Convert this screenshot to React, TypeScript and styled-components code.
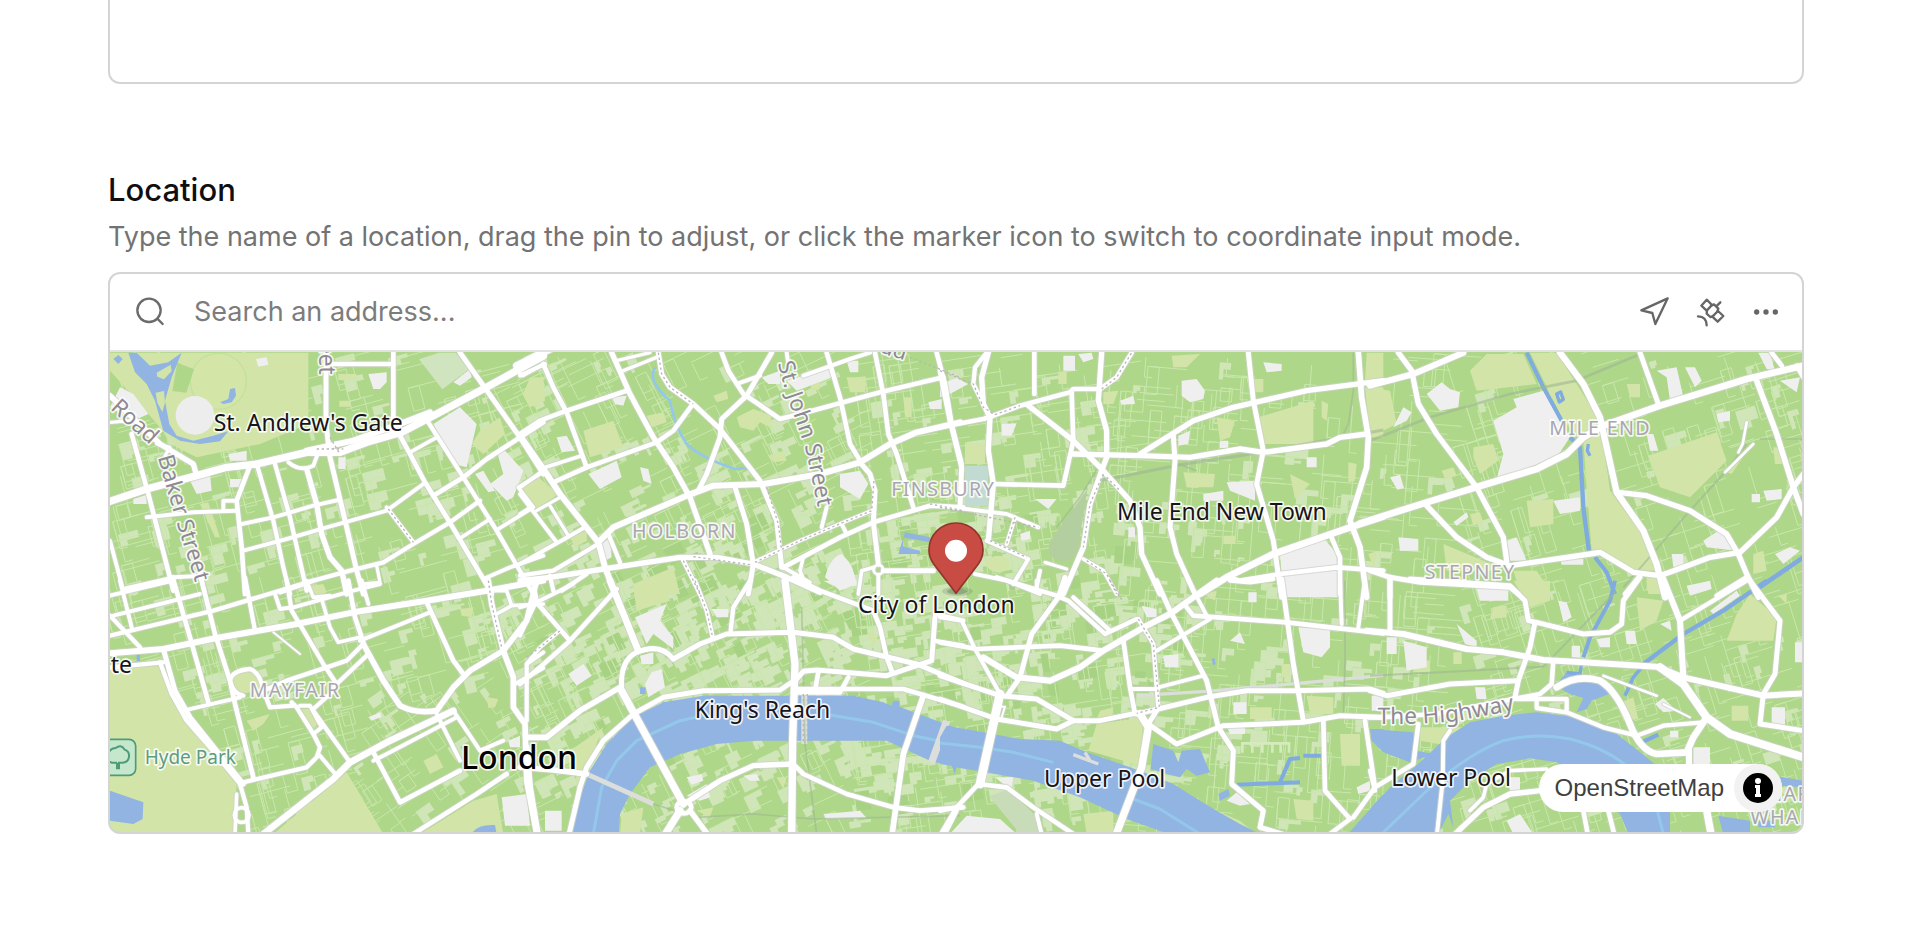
import React from 'react';
import styled, { createGlobalStyle } from 'styled-components';

const GlobalStyle = createGlobalStyle`
  * { box-sizing: border-box; }
  body {
    margin: 0;
    background: #fff;
    font-family: Inter, "Liberation Sans", sans-serif;
    -webkit-font-smoothing: antialiased;
  }
`;

const Page = styled.main`
  display: flex;
  flex-direction: column;
  gap: 88px;
  padding: 0 104px 118px 108px;
`;

const NotesInput = styled.textarea`
  display: block;
  width: 100%;
  height: 84px;
  border: 2px solid #d4d4d4;
  border-top: 0;
  border-radius: 0 0 12px 12px;
  background: #fff;
  resize: none;
  outline: none;
`;

const Field = styled.section`
  display: flex;
  flex-direction: column;
`;

const FieldLabel = styled.label`
  color: #0f0f12;
  font-size: 31px;
  font-weight: 500;
  line-height: 36px;
`;

const FieldHint = styled.p`
  margin: 11px 0 17px;
  color: #737373;
  font-size: 27px;
  line-height: 36px;
`;

const MapCard = styled.div`
  overflow: hidden;
  border: 2px solid #d4d4d4;
  border-radius: 12px;
  background: #fff;
`;

const SearchRow = styled.div`
  display: flex;
  align-items: center;
  gap: 28px;
  height: 78px;
  padding: 0 20px 0 24px;
  border-bottom: 2px solid #e2e2e2;
  color: #6b6b6b;
`;

const SearchInput = styled.input`
  flex: 1;
  min-width: 0;
  padding: 0;
  border: 0;
  outline: none;
  background: none;
  color: #171717;
  font: 400 27px/36px Inter, "Liberation Sans", sans-serif;
  &::placeholder { color: #7c7c7c; opacity: 1; }
`;

const Actions = styled.div`
  display: flex;
  gap: 24px;
`;

const IconButton = styled.button`
  display: flex;
  width: 32px;
  height: 32px;
  padding: 0;
  border: 0;
  background: none;
  color: #666;
`;

const Icon = styled.svg`
  display: block;
  flex: none;
  width: 32px;
  height: 32px;
  fill: none;
  stroke: currentColor;
  stroke-width: 7;
  stroke-linecap: round;
  stroke-linejoin: round;
`;

const MapView = styled.div`
  position: relative;
`;

const MapCanvas = styled.svg`
  display: block;
  width: 100%;
  height: auto;
  background: #aed789;
`;

const Attribution = styled.div`
  position: absolute;
  right: 20px;
  bottom: 20px;
  display: flex;
  align-items: center;
  gap: 10px;
  height: 48px;
  padding-left: 16px;
  border-radius: 24px;
  background: #fff;
`;

const AttributionLink = styled.a`
  color: #404040;
  font: 400 24px/48px "Liberation Sans", Arial, sans-serif;
  text-decoration: none;
`;

const InfoButton = styled.button`
  display: flex;
  align-items: center;
  justify-content: center;
  width: 48px;
  height: 48px;
  padding: 0;
  border: 0;
  border-radius: 50%;
  background: #f2f2f2;
`;

const PlaceText = styled.text<{ $size: number; $color?: string; $tracking?: number; $weight?: number }>`
  font-family: "Noto Sans", "Open Sans", sans-serif;
  font-size: ${(p) => p.$size}px;
  font-weight: ${(p) => p.$weight ?? 400};
  letter-spacing: ${(p) => p.$tracking ?? 0}px;
  fill: ${(p) => p.$color ?? '#181418'};
  stroke: rgba(255, 255, 255, 0.85);
  stroke-width: 10px;
  stroke-linejoin: round;
  paint-order: stroke;
`;

type Line = [number, string];
interface Sheet {
  x: number;
  y: number;
  parks: string;
  built: string;
  water: string;
  canals?: Line[];
  rails?: Line[];
  roads: Line[];
  dashes?: string;
}

// The map is divided into eight sheets; three map units make one pixel at full width.
const SHEETS: Sheet[] = [
  {
    x: -27, y: -36,
    parks: 'M30,36 H625 V250 L480,310 L290,350 L230,320 L120,190 L30,90Z M1250,450 L1320,400 V500Z M1140,270 L1200,230 L1215,280 L1150,340 L1115,310Z M715,100H770V118H715Z M718,180H752V198H718Z M1320,130 Q1270,130 1270,165 Q1285,200 1320,200Z M300,490 L325,485 L360,590 L345,590Z',
    built: 'M60,140 L100,160 L145,220 L100,240 L30,200Z M1000,250 L1080,200 L1130,250 L1100,380 L1060,370Z M1190,330 L1215,330 L1270,390 L1240,470 L1220,480 L1170,430 L1210,400Z M270,420 L330,400 L335,450 L290,460Z M805,100 L860,95 V125 L840,145 H820Z M468,55 L500,50 L505,72 L475,78Z M385,340 L440,330 V360 H390Z M715,350 h22 v35 h-22z M1060,125 L1110,85 L1115,110 L1080,135Z M1125,400 L1150,390 L1185,450 L1165,455Z M390,415 h35 v25 h-35z M100,475 L140,462 V490 H100Z',
    water: 'M85,36 L105,95 L140,130 L165,180 L190,270 L240,300 L300,310 L360,302 L385,272 L340,285 L280,300 L230,285 L208,250 L195,180 L215,110 L245,36 L205,65 L150,75 L110,36Z M40,55 L55,43 L68,55 L55,70Z M360,185 L385,175 L390,145 L405,142 L408,165 L395,185 L370,190Z',
    roads: [
      [22, 'M30,482 L140,445 L290,405 L380,380 L470,370 L620,335 L720,335 L800,305 L905,275 L1000,225 L1150,145 L1330,46'],
      [18, 'M620,330 L760,300 L900,250 L990,215'],
      [14, 'M95,280 L145,460 L220,750'], [12, 'M30,600 L70,750'], [10, 'M30,245 L95,240'],
      [16, 'M30,165 L180,310 L280,370 L290,405'],
      [15, 'M678,30 L678,250 L690,350 L740,560 L770,690 L790,760'],
      [13, 'M700,70 H880'], [14, 'M880,30 V270'],
      [15, 'M1080,36 L1150,135 L1260,290 L1330,400'],
      [14, 'M900,285 L930,340 L975,425 L1040,530 L1150,715 L1175,760'],
      [13, 'M985,245 L1090,410 L1190,570 L1300,760'],
      [11, 'M930,335 L1010,290'], [14, 'M1000,465 L1090,410 L1160,355 L1330,245'],
      [11, 'M1250,90 L1268,105 L1330,70'],
      [14, 'M450,375 L410,480 L425,620 L435,760'], [13, 'M470,370 L520,540 L550,680 L570,760'],
      [13, 'M525,370 L570,530 L620,750'], [16, 'M620,385 L650,490 L665,580 L690,650 L725,690 L740,760'],
      [12, 'M565,365 Q600,395 640,375 L655,335'],
      [12, 'M425,550 L520,530 L640,495 L715,478'], [12, 'M430,630 L560,595 L680,560 L860,510 L970,430'],
      [12, 'M860,500 L940,605'], [13, 'M540,755 L640,720 L750,690 L850,665 L940,610 L1050,545 L1140,480'],
      [12, 'M70,745 L220,710 L310,705'], [12, 'M140,530 L280,515 L410,510 M370,510 V480 H410'],
      [11, 'M1320,400 L1255,440 L1300,500 L1195,565 M1085,590 L1170,535'],
      [12, 'M1150,715 L1230,680 L1330,645'], [12, 'M300,700 L315,760'], [10, 'M830,675 L840,725 L790,730'],
      [10, 'M170,310 L210,320 L195,345'],
    ],
    dashes: 'M650,325 H730 M865,505 L940,605 M690,290 L720,340',
  },
  {
    x: -27, y: 684,
    parks: 'M30,265 L180,255 L210,350 L260,430 L330,510 L410,610 L400,760 H30Z M520,760 L740,575 L850,760Z M960,760 L1120,660 L1190,640 L1210,760Z M390,305 Q395,275 430,270 Q480,280 470,320 Q440,350 400,330Z M605,385 L630,385 L655,430 L635,445Z M970,540 L1010,520 L1030,560 L990,580Z M1080,85 L1120,80 L1115,110 L1085,105Z M1160,350 L1195,355 L1185,380 L1165,382Z M440,420 L510,400 L490,430 L460,450Z M630,15 L670,10 L680,35 L650,50Z',
    built: 'M1205,650 L1280,640 L1290,735 L1215,735Z M1225,480 L1260,465 V500 H1230Z M805,410 L840,395 L845,408 L815,420Z',
    water: 'M30,630 L130,665 L128,715 L100,730 L30,720Z M1115,760 Q1130,730 1185,733 L1190,760Z M110,222h10v20h-10z',
    roads: [
      [12, 'M30,45 L220,0'], [12, 'M40,105 L300,40'], [13, 'M30,165 L340,90 L590,15 L640,0'],
      [18, 'M30,218 L190,205 L350,172 L590,130 L760,95 L980,60 L1160,30 L1330,0'],
      [12, 'M60,0 L95,140'], [13, 'M30,105 L120,200'], [14, 'M218,-10 L270,170 L325,365'],
      [14, 'M300,-20 L345,160 L390,300 L405,370 L460,590'], [13, 'M435,-10 L465,150'],
      [12, 'M525,40 L540,85 L580,80 L760,30 L840,10'], [13, 'M560,0 L575,90 L670,250 L710,310'],
      [11, 'M620,0 L640,50 L690,45'], [11, 'M665,55 L690,140 L715,185 L780,170'],
      [14, 'M745,0 L765,110 L790,185'], [12, 'M785,0 L805,70'], [14, 'M980,65 L1060,240 L1090,280'],
      [12, 'M780,180 L990,95'], [17, 'M1165,0 L1175,70 L1210,210 L1240,290 L1240,380 L1275,430 L1280,600 L1310,760'],
      [17, 'M790,190 L850,300 L900,375 Q950,400 1010,390 L1060,320 L1110,270 L1210,210 L1280,120 L1310,0'],
      [13, 'M490,330 L560,300 L680,260 L740,240 L790,190'], [13, 'M800,225 L710,310 L690,340 L640,385'],
      [13, 'M30,260 L190,245'], [13, 'M180,245 L215,340 L260,420 L330,500 L420,610 L440,680 L445,760'],
      [15, 'M190,205 L225,330 L270,410 L390,560 L430,610'], [12, 'M250,390 L420,350'],
      [13, 'M390,300 Q395,270 450,265 Q480,275 490,330 L510,380 L580,375 M390,300 Q400,340 430,345'],
      [13, 'M575,365 L590,380 L640,460 L660,500 L650,530 L620,560 L430,605'],
      [12, 'M600,375 L630,375 L665,440 L640,460'], [13, 'M640,390 L750,545'], [12, 'M660,525 L710,585'],
      [20, 'M490,760 L700,595 L750,545 L870,480 L1060,390'],
      [14, 'M820,515 L900,665 L1080,570'], [12, 'M820,540 L860,520 L1070,410'], [12, 'M1010,400 L1080,540'],
      [12, 'M1060,390 L1140,510 L1210,480'], [14, 'M940,760 L1130,640 L1220,580'],
      [11, 'M410,640 L405,760 M403,703 a22,22 0 1 0 44,0 a22,22 0 1 0 -44,0'],
      [11, 'M1180,30 L1220,30 L1235,75 L1330,70 M1190,100 L1235,75'],
      [12, 'M1280,420 L1280,250 L1330,215 M1245,310 L1330,262'], [6, 'M520,155 L600,220'],
    ],
    dashes: 'M1165,0 L1175,70 L1205,200',
  },
  {
    x: 1233, y: -36,
    parks: 'M190,270 L280,240 L310,320 L210,350Z M0,440 L50,405 L115,460 L45,510Z M980,110 H1035 V155 H990Z M340,730 L460,680 L480,760H345Z M380,225 L430,215 L440,245 L395,260Z M650,230 L700,205 L755,225 L750,260 L720,245 L700,270 L660,260Z M745,345 L790,330 L800,360 L760,365Z M30,110 L70,110 L75,180 L30,200 L10,160Z M1150,170 h25 v60 h-20z M870,130 L900,120 V145 L875,155Z M580,165 L620,150 L625,175 L590,185Z M150,590 L200,570 V600 L165,620Z',
    built: 'M205,400 L290,360 L305,410 L240,445Z M960,400 L1020,390 L1045,430 L1020,475 L960,440Z M915,710 Q930,650 965,640 Q1000,670 1010,730 L960,750Z M800,120 L930,80 L935,110 L830,150Z M360,380 L385,385 L395,430 L370,420Z M275,170 L320,165 L310,195 L285,190Z M980,60 h35 v35 h-25z M725,110 L780,90 L780,130 L745,130Z M1225,185 L1265,175 V205 H1230Z M245,610 L270,590 L275,650 L255,660Z M110,290 L140,285 L165,330 L125,335Z',
    water: 'M1155,575 L1230,590 V605 L1150,590 V618 L1200,630 V640 L1135,640Z',
    canals: [[8, 'M405,80 Q380,120 450,180 Q465,260 500,310 Q540,350 645,385 L690,382']],
    roads: [
      [22, 'M-10,75 L100,20'], [12, 'M0,105 L75,70'], [14, 'M70,70 L100,140 L140,215 L200,380'],
      [16, 'M275,36 L330,160 L400,290 L460,380 L510,470 L570,640'], [10, 'M310,90 L410,50 M290,60 L390,36'],
      [14, 'M0,280 L60,240 L140,210 L320,150'], [11, 'M60,385 L185,345'],
      [14, 'M100,425 L200,380 L410,305 L460,270 L515,195'],
      [15, 'M415,36 L425,100 L450,140 L520,190 L600,265 L720,420 L770,540 L785,680'],
      [15, 'M755,36 L680,165 L605,235 L600,290 L560,400 L535,450'],
      [14, 'M605,36 L625,90 L670,160 L715,190 L780,235 L860,215 L1080,155 L1270,110'],
      [12, 'M650,130 L720,105 M850,105 L990,55 L1050,36'], [12, 'M800,36 L805,70'],
      [14, 'M920,36 L960,170 L990,310 L1020,360'],
      [18, 'M235,605 L280,560 L500,465 L580,435 L730,430 L900,400 L1020,365 L1110,310 L1190,275 L1320,245'],
      [14, 'M1065,36 L1090,160 L1105,280 L1130,340 L1180,500'], [14, 'M1250,36 L1275,130 L1295,250 L1325,370'],
      [18, 'M0,285 L70,385 L120,460 L235,605 L255,680 L290,770'],
      [12, 'M0,440 L70,390'], [12, 'M0,460 L110,605'], [10, 'M50,510 L120,470 M90,495 L145,585 M0,520 L30,500'],
      [12, 'M0,670 L195,560'], [16, 'M0,720 L90,710 L250,685 L480,650 L590,650 L700,670 L800,710 L900,755'],
      [13, 'M0,705 L100,690 L235,610 M125,750 L200,700 M90,705 L100,750'], [13, 'M265,580 L300,665'],
      [13, 'M485,650 L540,760'], [15, 'M645,440 L680,550 L700,670 L685,760'], [11, 'M700,665 L840,600 L970,545 L1055,510'],
      [14, 'M790,680 L960,590 L1060,545 L1230,495 L1330,500'],
      [15, 'M1020,365 L1050,400 L1065,450 L1060,545 L1075,670'], [12, 'M1075,704 V760'],
      [12, 'M920,500 L905,560'], [12, 'M965,550 L980,580'], [15, 'M1090,690 H1240'],
      [9, 'M1061,687 a14,14 0 1 0 28,0 a14,14 0 1 0 -28,0'], [11, 'M1062,680 L1025,690 L1015,760'],
      [11, 'M850,650 L840,690 L860,740 M790,680 L870,725'],
    ],
    dashes: 'M415,36 L425,100 L450,140 L520,190 M740,440 L775,550 L785,630 M490,660 L540,760 M705,665 L840,600 L970,545 L1055,510 L1062,420 M520,648 L690,672 M1230,490 L1330,510 M1170,50 L1320,110',
  },
  {
    x: 1233, y: 684,
    parks: 'M340,20 L430,-10 L450,60 L350,90Z M165,500 L250,440 L200,560 L170,640Z M305,700 L370,680 L360,760 H300Z M770,590 L800,590 L790,625Z M530,690 L580,680 L570,710Z M1040,150 L1075,165 L1060,200Z',
    built: 'M345,110 L440,70 L420,120 L460,170 L460,205 L400,160 L380,190Z M395,275 L425,265 L435,320 L385,350 L375,310Z M500,590 L545,580 L550,600 L515,612Z M500,645 L560,610 L570,650 L540,660Z M910,700 L1020,690 L1040,712 L920,715Z M910,0 H1010 V15 L940,15Z M360,225 L400,215 V250 H365Z M575,85 L625,85 V110 H590Z M75,690 h50 v60 h-50z M670,585 L710,580 L720,600 L690,600Z M145,280 L190,250 L215,285 L170,315Z',
    water: 'M155,770 L180,650 L210,570 L260,490 L340,410 L430,365 L550,345 L720,345 L1000,345 L1090,365 L1115,375 L1120,360 H1138 V378 L1330,450 V560 L1310,555 L1305,580 L1300,553 L1240,545 L1100,480 L870,480 L700,480 L590,490 L480,520 L390,560 L330,640 L300,700 L295,770Z M360,320h16v20h-16z',
    canals: [[9, 'M220,760 L245,620 L290,540 L350,480 L480,420 L560,402 M930,403 L1060,425 L1180,465 L1330,495']],
    rails: [[14, 'M200,580 L400,670'], [18, 'M853,340 V490'], [22, 'M1280,420 L1235,545'], [5, 'M400,670 L530,710 L700,700 L880,715 L1320,705 M845,80 L855,490 L890,760']],
    roads: [
      [12, 'M0,10 L40,0 L50,60 L0,165'], [14, 'M45,60 L150,180 M0,310 L60,260 L150,180 L290,25'],
      [12, 'M0,80 L50,65 L160,10'], [11, 'M20,420 L20,250 L60,200 L120,150'], [20, 'M270,0 L355,210'],
      [15, 'M305,320 Q300,240 350,215 Q420,185 460,235'],
      [15, 'M460,235 L540,190 L620,160 L820,155 L940,170 L1000,205 L1190,250 L1330,308'],
      [17, 'M20,470 H80 L180,390 L300,320'],
      [15, 'M145,770 L180,620 L200,560 L250,480 L340,400 L430,350 L550,330 L780,328 L830,295 L850,272 L890,268 L1100,285 L1190,255 L1235,240 L1245,110'],
      [14, 'M820,335 L960,335 L985,290 M820,325 L1150,325 L1330,378 M895,275 L885,330'],
      [22, 'M305,330 L490,670'], [16, 'M500,665 L600,600 L700,555 L815,550'],
      [14, 'M815,545 L850,580 L980,640 L1120,680 L1200,690 L1330,680'], [22, 'M795,0 L825,250 L818,480 L815,770'],
      [17, 'M1210,345 L1150,520 L1115,770'], [22, 'M480,690 L430,770'], [16, 'M510,690 L570,770'],
      [14, 'M470,680 a22,18 0 1 0 44,0 a22,18 0 1 0 -44,0'], [13, 'M690,0 L640,80 L632,150'],
      [13, 'M525,0 L560,90 L578,170'], [14, 'M820,-10 L900,30 L1060,90 L1080,140 L1100,230 L1115,270'],
      [13, 'M1245,100 L1330,120 M1240,180 L1330,195'], [13, 'M1310,690 L1270,770'], [18, 'M20,500 L30,620 L55,770'],
      [16, 'M0,560 L100,568 L200,580'],
    ],
    dashes: 'M525,0 L560,90 L578,170 M20,230 L60,200 L120,150 M850,340 V490 M862,340 V490',
  },
  {
    x: 2493, y: -36,
    parks: 'M955,230 L1120,180 V310 H970Z M730,395 L825,400 L820,440 L740,440Z M1050,400 L1110,430 L1065,475Z M830,230 L885,240 L870,290 L840,300Z M75,305 L135,310 V370 H75Z M1275,140 L1330,140 V290 H1290Z M695,45 L780,40 L740,80 L700,80Z M140,670 a35,25 0 1 0 70,0 a35,25 0 1 0 -70,0 M1280,36H1330V110L1275,120Z M1225,365 L1250,370 L1245,420 L1225,425Z M490,155 L535,150 L520,190 L490,190Z M920,115 h50 v40 h-40z M1145,180 L1165,190 L1160,240 L1145,230Z M355,95 L380,90 V130 H355Z M850,585 h35 v25 h-35z M1285,640 L1315,630 L1300,680Z',
    built: 'M725,120 L770,115 L795,150 L790,175 L750,185 L725,165Z M970,65 L1025,70 V90 L980,95Z M370,45 h35 v45 h-35z M1020,640 L1150,590 L1190,640 L1195,770 H1030Z M860,425 L945,420 V480 L870,450Z M790,460 L850,450 V480 H790Z M0,130 L50,112 L85,130 L20,165 L0,170Z M1100,350 h30 v30 h-30z M285,475 L350,475 L325,505Z M185,250 L230,248 L215,285 H185Z M540,180 L580,165 L585,190 L545,192Z M840,300 h25 v22 h-25z M715,285 L750,270 L745,310 L715,315Z M415,40 L455,36 L460,55 L430,65Z M565,560 h20 v30 h-20z M240,580 L270,570 V595 L245,600Z',
    water: '',
    rails: [[9, 'M480,420 L720,372 L900,345 L1330,268'], [5, 'M1240,36 V150 L1225,250 L1200,300 M715,370 L770,390 M480,370 L420,470 L350,560']],
    roads: [
      [15, 'M0,90 L30,240 L65,380 L60,500'], [16, 'M145,36 L125,110 L130,190 L150,230 L145,330 L160,430 L145,600'],
      [13, 'M140,36 L105,80 L100,130 L130,190'], [14, 'M0,260 L130,235 L160,225 L240,195 L390,155 L400,145 L480,145 L530,110 L575,36'],
      [14, 'M283,36 V160'], [14, 'M395,155 L400,300 L370,435 L165,430'],
      [16, 'M485,36 L475,180 L500,270 L500,350 L485,390 L450,490 L430,620 L370,760'],
      [16, 'M265,195 L400,300 L490,390 L570,480 L600,560 L605,640 L660,760'],
      [16, 'M400,340 L600,345 L750,350 L900,325 L970,335 L1160,310 L1200,290 L1280,280'],
      [16, 'M600,340 L760,240 L880,200 L1100,150 L1330,120'], [15, 'M700,285 L705,360 L690,560 L710,640 L765,760'],
      [15, 'M925,36 L940,180 L970,330 L950,430 L1000,600 L1025,770'],
      [17, 'M1255,36 L1265,170 L1285,290 L1280,380 L1230,540 L1260,620 L1280,770'],
      [20, 'M780,760 L860,710 L1000,640 L1230,560 L1330,528'], [14, 'M865,710 L900,720 L1020,700 L1190,680 L1330,690'],
      [14, 'M1170,580 L1200,650 V760'], [12, 'M0,495 L200,520 L295,560'], [12, 'M225,530 L200,610 M140,600 L265,655 L220,730'],
      [12, 'M105,700 L200,720 L300,760 M300,690 L290,740'], [11, 'M430,655 L490,690 L530,760'], [10, 'M315,665 L380,685'],
    ],
    dashes: 'M0,90 L100,130 L130,200 L165,222 L240,195 M485,145 L530,110 L575,36 M490,400 L450,490 L430,620 M0,500 L295,560 M225,530 L200,610 M150,600 L260,650 M440,660 L500,700 L530,760 M500,410 L540,450',
  },
  {
    x: 2493, y: 684,
    parks: 'M470,430 L610,410 L600,555 L445,510Z M930,380 H995 V415 H930Z M1100,345 L1180,350 V400 H1110Z M1200,460 H1260 V555 H1205Z M1060,655 L1120,660 V720 L1070,715Z M430,700 L520,690 L520,760H440Z M1025,250 h25 v40 h-25z M480,390 L520,380 L515,410 L470,415Z M790,40 L830,30 L825,60Z M830,690 L900,720 L930,745 H890Z',
    built: 'M1075,140 L1170,145 V200 L1145,230 L1090,215Z M1035,-5 H1190 V50 L1040,45Z M20,770 L80,705 L180,715 L230,760Z M870,180 L900,155 L915,190Z M925,35 h25 v30 h-25z M880,365 h40 v35 h-40z M605,75 L650,85 V110 H620Z M670,225 l45,-5 v40 h-40z M860,660 L890,635 L930,670 L900,675Z M860,435 h55 v25 h-45z M1250,620 L1290,600 V630 L1255,640Z M165,590 L220,590 L215,620 L190,610Z M1295,345 L1330,340 V390 H1295Z',
    water: 'M0,470 L20,435 L130,455 L240,475 L360,480 L440,515 L600,570 L700,610 L780,660 L830,690 L900,730 L980,770 H690 560,715 L560,715 L420,650 L280,600 L110,570 L45,560 V580 L35,555 L0,550Z M1330,640 L1215,770 H1330Z M640,490 L700,510 L715,545 L725,510 L780,505 L810,575 L770,585 L740,565 L720,590 L680,580 L632,565Z M835,640 L865,625 L870,645 L840,660Z M1295,445 H1330 V482 H1295Z M815,235l8,-4l4,20l-8,2z',
    canals: [[9, 'M0,487 L120,500 L220,515 L340,545 M580,655 L660,685 L780,760'], [12, 'M890,612 L1080,605 M1020,605 L1050,535 L1080,532 M1090,525 H1145']],
    rails: [[10, 'M590,345 L800,332 L1000,315 L1330,284'], [10, 'M400,522 L475,550 M435,515 L450,540'], [5, 'M1215,0 V240 L1210,410']],
    roads: [
      [12, 'M0,110 L65,120 L105,205 L180,340'], [14, 'M0,185 L110,205 L360,195 L490,210'],
      [18, 'M130,230 L230,290 L330,300 L420,260 L490,210 L620,135 L690,100 L830,0'],
      [15, 'M0,285 L180,345 L290,355 L400,420 L480,420 L600,395'], [15, 'M0,355 L170,415 L350,445 L400,420'],
      [26, 'M180,340 L120,610'], [15, 'M375,-10 L355,50 L275,160 L240,290 L205,340'],
      [13, 'M170,-10 L350,45 L385,60 L495,160 L590,115 M400,50 L510,150'], [12, 'M290,0 V25'],
      [15, 'M650,0 L690,90 L800,300 L835,440 L880,510 L875,610 L970,690 L960,740 L1060,770'],
      [12, 'M745,0 L800,105 M810,115 L650,210'], [14, 'M740,80 L760,105 L1040,125 L1330,158'],
      [14, 'M550,180 L570,320 L585,400'], [13, 'M595,115 L640,190 L655,380'], [12, 'M655,320 L790,285 M575,325 H655'],
      [15, 'M590,400 L655,385 L800,350 L920,330 L1060,330 L1290,325 L1330,338'],
      [22, 'M600,400 L625,440 L605,560 L525,770'], [15, 'M650,390 L625,430 L710,490 L850,435 L1090,425 L1200,405 L1330,410'],
      [15, 'M1025,-5 L1060,250 L1090,420'], [12, 'M1200,-5 L1205,130 M1275,-5 L1255,140'],
      [14, 'M1150,420 L1155,630 L1230,715 L1170,760'], [14, 'M1275,420 L1305,620 L1240,710'],
      [13, 'M870,0 L930,5 L1000,-5'], [14, 'M0,690 L50,680 L115,610 L200,620 L280,680 L400,760'],
      [14, 'M0,765 L50,680'], [12, 'M290,700 L305,760'], [6, 'M180,378 H195 L185,410'],
    ],
    dashes: 'M595,115 L640,190 L658,380 L590,398 M510,0 L550,65',
  },
  {
    x: 3783, y: -36,
    parks: 'M480,36 H560 L690,240 L720,450 L830,600 L860,690 L790,690 L665,630 L650,440 L640,300 L580,240Z M300,90 L350,40 H460 L500,130 L320,150Z M835,345 L1040,275 L1070,360 L960,470 L870,440Z M0,140 L60,150 L80,250 L0,290Z M470,480 L550,475 V550 L480,560Z M220,610 L340,660 L400,690 H230Z M310,320 L370,310 L385,360 L330,400 L310,350Z M770,130 L810,130 V170 H780Z M1210,320 L1240,320 V370 H1215Z M1060,390 L1125,340 L1085,400Z M300,520 L330,515 L340,545 L310,555Z M1150,640 L1180,630 L1190,690 L1150,700Z M215,390 L250,380 L260,405 L225,415Z M430,690 H500 L540,750 H450Z M830,700h35v50h-35z',
    built: 'M170,160 L215,125 L240,145 L270,155 L265,200 L210,210Z M430,175 L520,150 L600,290 L560,350 L380,415 L400,340 L370,240 L440,200Z M860,90 L920,80 L940,170 L900,180 L890,110Z M1000,600 L1060,560 L1100,630 L1010,620Z M85,590 L145,595 V630 H90Z M550,480 L630,470 V510 L570,520Z M410,600 L440,590 L470,660 H420Z M60,410 l30,-8 l12,40 l-20,5z M70,260 L100,200 L125,215 L110,240Z M830,280 L850,280 L865,330 H840Z M1165,36 L1200,36 L1215,90 L1190,85Z M1215,640 L1260,620 L1290,630 L1240,670Z M945,80l30,0l20,40l-20,20z M905,640h35v40h-30z M1180,450 L1235,445 V475 L1190,480Z M1040,220 l40,-10 v30 l-35,5z M1230,120 L1290,110 L1280,155Z M1145,460h25v25h-25z M570,655 H640 V672 H575Z M250,545 L290,515 L295,530 L260,555Z',
    water: '',
    canals: [[12, 'M470,36 L520,140 L575,240'], [13, 'M600,290 L630,320 L640,500 L658,640'], [12, 'M675,650 L710,695 L735,760'], [14, 'M1165,742 L1300,650'], [10, 'M560,160 l12,-6 l8,22 l-12,8z M655,310 L652,330 L660,345']],
    rails: [[8, 'M0,300 L180,230 L420,160 L620,120 L820,36'], [6, 'M760,740 L960,510 L1060,400 L1130,310'], [4, 'M1170,295 H1300']],
    roads: [
      [16, 'M85,36 L125,90 L145,190 L200,280 L320,440 L400,590 L410,660'], [18, 'M0,135 L130,100 L280,36'],
      [20, 'M-30,548 L170,485 L350,430 L500,385 L590,340 L640,290 L700,255 L870,195 L1130,115 L1300,75'],
      [19, 'M570,36 L640,130 L690,230 L740,455 L820,570 L860,670 L885,770'],
      [16, 'M745,455 L830,465 L960,510 L1070,580 L1105,640 L1130,700 L1165,770'],
      [16, 'M170,495 L260,590 L350,650 L420,675 L660,640 L690,635 L790,695 L870,705 L940,680 L1020,650 L1110,635 L1220,530 L1270,440 L1300,400'],
      [17, 'M1160,120 L1220,280 L1270,440 L1300,520'], [15, 'M810,36 L865,190'], [14, 'M1205,36 L1235,75 M1280,75 L1300,110'],
      [15, 'M0,690 L60,710 L150,725 L420,740 L445,760'], [15, 'M60,710 V770'], [14, 'M765,760 L810,705'],
      [14, 'M1040,765 L1130,710'], [8, 'M1130,245 L1118,310 L1105,335 M1150,310 L1065,395'],
    ],
  },
  {
    x: 3783, y: 684,
    parks: 'M1100,100 L1140,40 L1220,110 L1210,180 H1070Z M150,440 L280,440 L260,480 L210,490 L150,480Z M800,50 L880,60 L860,120 L810,150Z M430,0 H540 V60 L480,80Z M1085,375 h50 v45 h-50z M740,370 L790,350 L805,415 L760,420Z M830,0 H880 V40 H835Z M370,80 L410,75 V110 L360,115Z M150,235 L180,240 V275 L130,275Z M1225,45 L1250,40 V70Z M250,215h25v35h-25z',
    built: 'M100,180 L170,200 V260 L110,270Z M1205,380 h40 v60 h-40z M855,370 L880,352 L920,390 L880,395Z M320,20 H415 V60 H330Z M260,130 L320,180 V200 L285,190Z M1020,90 L1100,30 L1110,45 L1030,100Z M50,170 L80,170 V220 H50Z M565,60 L590,65 L605,110 L580,125Z M605,195 H630 V230 H605Z M765,150 L795,150 L800,190 L770,190Z M950,15 L1020,0 L1025,25 L960,45Z M870,130 L900,120 L905,150Z M970,500 H1020 V560 H970Z M315,320 L345,320 L350,355 H320Z M1275,185H1300V245H1275Z M410,720 L450,700 L490,760 H430Z M680,175 L720,170 V200 H690Z M415,590 h35 v45 h-30z M900,450 h25 v20 h-25z',
    water: 'M0,770 L0,690 L60,620 L150,545 L230,470 L300,425 L400,405 L500,395 L620,410 L740,460 L830,530 L900,590 L900,770 H780 L750,700 L640,590 L560,545 L480,533 L380,550 L300,600 L240,660 L250,740 L235,700 L200,770Z M0,445 L130,455 L140,510 L190,520 L120,545 L40,515 L5,480Z M555,315 L590,275 L680,290 L730,335 L665,360 L650,385 L620,395 L640,352 L600,340Z M1210,585 L1300,600 V620 L1220,615Z M1045,705 L1140,720 V760 H1060Z M1165,720h50v20h-50z',
    canals: [[12, 'M735,0 L720,60 L660,170 L640,230'], [10, 'M635,245 L630,280 L590,275'], [13, 'M1190,0 L1060,90 L940,160 L820,250'], [11, 'M815,260 L790,290 L765,345'], [12, 'M865,462 L815,485'], [9, 'M40,755 L160,640 Q290,520 400,480 Q500,455 600,475 Q700,500 765,552 M862,690 L880,760']],
    rails: [[6, 'M0,285 L300,270 L520,258 L740,30']],
    roads: [
      [15, 'M60,-10 V150'], [15, 'M120,-5 L420,15 L465,60 L475,120 L500,125 L640,160 L720,155 L755,130 L760,60 L810,-10'],
      [18, 'M-10,150 L100,160 L290,205 L400,215 L520,238 L640,245 L860,258 L940,290 L1180,345 L1300,338'],
      [15, 'M495,125 L480,200 L445,300 L435,350'], [15, 'M0,330 L50,345 L240,310 L440,300'],
      [14, 'M430,355 L510,340 L545,310 L550,240'], [13, 'M440,355 L590,355 V395 M500,355 V382 L590,395 L700,440 L800,465 L880,435 L1000,425'],
      [20, 'M560,320 Q620,280 690,300 Q740,330 780,430 Q810,510 860,520 L950,515 L970,470 L1010,410'],
      [24, 'M870,260 L940,310 L1010,410 L1080,460 L1300,530'], [18, 'M880,-5 L930,120 L940,290'],
      [13, 'M930,120 L1130,0'], [15, 'M1140,0 L1230,120 L1215,280 L1180,340 L1170,430 L1300,450'],
      [18, 'M957,510 V570'], [14, 'M15,620 L130,550 L145,430'], [13, 'M0,570 L15,630'],
      [12, 'M240,450 L220,480 L218,600 L200,770'], [16, 'M250,765 L340,680 L420,640 L510,630'], [11, 'M300,690 L340,650 L350,610 L420,570 L530,565'],
      [14, 'M640,690 L655,770 M715,690 L735,770'], [22, 'M1010,690 L1025,770'],
      [14, 'M-5,410 L30,410 L200,400 L430,355'], [8, 'M700,285 L860,345'], [6, 'M880,370 L960,410'],
    ],
  },
];

// Deterministic generator, so that parcels and blocks keep their places between renders.
function makeRandom(seed: number) {
  let s = seed;
  return () => {
    s = (s * 1664525 + 1013904223) % 4294967296;
    return s / 4294967296;
  };
}

function localAngle(x: number, y: number) {
  if (x < 1150) return y > 1000 && x > 700 ? -0.6 : -0.26;
  if (x < 2200) return -0.45;
  if (x < 3000) return -0.15;
  if (x < 4000) return 0.08;
  return -0.3;
}

function buildTexture() {
  const rnd = makeRandom(77);
  let blocks = '';
  let parcels = '';
  let deep = '';
  const at = (x: number, y: number, a: number, u: number, v: number) =>
    `${Math.round(x + u * Math.cos(a) - v * Math.sin(a))},${Math.round(y + u * Math.sin(a) + v * Math.cos(a))}`;
  for (let i = 0; i < 5200; i++) {
    const x = rnd() * 5076;
    const y = rnd() * 1440;
    const a = localAngle(x, y);
    const dx = (x - 2300) / 950;
    const dy = (y - 860) / 440;
    const centre = Math.exp(-(dx * dx + dy * dy));
    const w = 16 + rnd() * 54;
    const h = 14 + rnd() * 44;
    const keep = rnd();
    const threshold = (x < 2000 ? 0.14 : 0.05) + centre * 0.85;
    if (keep < threshold) {
      const n = w * (0.3 + rnd() * 0.4);
      const k = h * (0.3 + rnd() * 0.4);
      blocks += `M${at(x, y, a, 0, 0)}L${at(x, y, a, w, 0)}L${at(x, y, a, w, k)}L${at(x, y, a, n, k)}L${at(x, y, a, n, h)}L${at(x, y, a, 0, h)}Z`;
    } else if (keep > 0.93 && centre > 0.3) {
      deep += `M${at(x, y, a, 0, 0)}L${at(x, y, a, w, 0)}L${at(x, y, a, w, h)}L${at(x, y, a, 0, h)}Z`;
    }
    if (i % 3 === 0) {
      const l = 50 + rnd() * 100;
      if (rnd() < 0.5) parcels += `M${at(x, y, a, 0, 0)}L${at(x, y, a, l, 0)}`;
      else parcels += `M${at(x, y, a, 0, 0)}L${at(x, y, a, 0, l)}L${at(x, y, a, 24, l)}`;
      if (rnd() < 0.3) parcels += `M${at(x, y, a, 0, 0)}L${at(x, y, a, 34, 0)}L${at(x, y, a, 34, l * 0.7)}L${at(x, y, a, 0, l * 0.7)}Z`;
    }
  }
  return { blocks, parcels, deep };
}

const TEXTURE = buildTexture();

function SheetLayer({ draw }: { draw: (sheet: Sheet) => React.ReactNode }) {
  return (
    <>
      {SHEETS.map((sheet, i) => (
        <g key={i} transform={`translate(${sheet.x} ${sheet.y})`}>{draw(sheet)}</g>
      ))}
    </>
  );
}

const GREY = '#aaa6af';
const STREET = '#8f8994';

function StreetName({ id, d, children }: { id: string; d: string; children: string }) {
  return (
    <>
      <path id={id} d={d} fill="none" />
      <PlaceText $size={68} $color={STREET}>
        <textPath href={`#${id}`}>{children}</textPath>
      </PlaceText>
    </>
  );
}

function LondonMap() {
  return (
    <MapCanvas viewBox="3 -2 5076 1440" role="img" aria-label="Map of London">
      <path d={TEXTURE.blocks} fill="#d0e6b9" />
      <path d={TEXTURE.deep} fill="#a8d283" />
      <path d={TEXTURE.parcels} fill="none" stroke="#c9e7ac" strokeWidth="3" />
      <SheetLayer draw={(s) => <><path d={s.parks} fill="#d2e4a8" /><path d={s.built} fill="#efefef" /></>} />
      <g>
        <circle cx="328" cy="86" r="84" fill="#d3e6a8" stroke="#c3e19b" strokeWidth="4" />
        <circle cx="258" cy="188" r="58" fill="#ededed" />
        <path d="M205,30 L255,50 L232,120 L190,115Z" fill="#aed789" />
        <path d="M2568,339 H2638 V460 H2568Z" fill="#c1dbd3" />
        <path d="M2820,570 L2935,410 L2905,600 L2870,630 L2820,610Z" fill="#b4cf9f" />
        <path d="M2640,1330 L2700,1310 L2790,1400 L2800,1440 H2730Z" fill="#c9dcb9" />
        <path d="M930,20 L990,0 H1040 L1080,50 L1000,110Z" fill="#d0e4c0" />
        <path d="M3400,1200 V1172 H3540 V1200 M3430,1172 V1200 M3460,1172 V1200 M3490,1172 V1200 M3515,1172 V1200" fill="none" stroke="#d6ebbd" strokeWidth="8" />
      </g>
      <SheetLayer draw={(s) => (
        <>
          <path d={s.water} fill="#91b4e2" />
          {s.canals?.map(([w, d], i) => (
            <path key={i} d={d} fill="none" stroke={w < 10 ? '#94c8ea' : '#7fabe0'} strokeWidth={w} strokeLinejoin="round" />
          ))}
          {s.rails?.map(([w, d], i) => (
            <path key={i} d={d} fill="none" stroke={w > 9 ? '#dcdedb' : '#9fb595'} strokeOpacity={w > 9 ? 1 : 0.6} strokeWidth={w} />
          ))}
        </>
      )} />
      <g fill="#d2e4a8">
        <path d="M143,60 L185,36 L188,55 L165,80 L145,72Z" />
        <path d="M140,120 L165,115 L168,150 L160,178 L145,150Z" />
      </g>
      <g fill="none" strokeLinejoin="round" strokeLinecap="round">
        <SheetLayer draw={(s) => s.roads.map(([w, d], i) => <path key={i} d={d} stroke="#cdd2cb" strokeOpacity="0.75" strokeWidth={w + 6} />)} />
        <SheetLayer draw={(s) => s.roads.map(([w, d], i) => <path key={i} d={d} stroke="#fff" strokeWidth={w} />)} />
        <SheetLayer draw={(s) => s.dashes && <path d={s.dashes} stroke="#b9b6b9" strokeWidth="4" strokeDasharray="7 8" strokeLinecap="butt" />} />
      </g>

      <StreetName id="road" d="M2,168 L172,322">Road</StreetName>
      <StreetName id="baker" d="M146,314 L200,500 L250,660 L290,800">Baker Street</StreetName>
      <StreetName id="street" d="M630,-124 V200">Street</StreetName>
      <StreetName id="john" d="M2006,32 L2034,130 L2090,290 L2130,480">St. John Street</StreetName>
      <StreetName id="oldroad" d="M2236,-40 L2330,5 L2440,40">Road</StreetName>
      <StreetName id="highway" d="M3806,1114 L3940,1113 L4040,1106 L4250,1066">The Highway</StreetName>

      <PlaceText $size={59} $color={GREY} $tracking={4} x="422" y="1032">MAYFAIR</PlaceText>
      <PlaceText $size={59} $color={GREY} $tracking={4} x="1569" y="555">HOLBORN</PlaceText>
      <PlaceText $size={59} $color={GREY} $tracking={4} x="2347" y="431">FINSBURY</PlaceText>
      <PlaceText $size={59} $color={GREY} $tracking={4} x="4321" y="247">MILE END</PlaceText>
      <PlaceText $size={59} $color={GREY} $tracking={4} x="3947" y="679">STEPNEY</PlaceText>
      <PlaceText $size={59} $color={GREY} $tracking={4} x="4892" y="1345">CANARY</PlaceText>
      <PlaceText $size={59} $color={GREY} $tracking={4} x="4924" y="1415">WHARF</PlaceText>

      <PlaceText $size={69} x="314" y="236">St. Andrew's Gate</PlaceText>
      <PlaceText $size={69} x="3024" y="502">Mile End New Town</PlaceText>
      <PlaceText $size={69} x="2247" y="782">City of London</PlaceText>
      <PlaceText $size={69} x="1757" y="1095">King's Reach</PlaceText>
      <PlaceText $size={69} x="2805" y="1303">Upper Pool</PlaceText>
      <PlaceText $size={69} x="3847" y="1301">Lower Pool</PlaceText>
      <PlaceText $size={69} x="5" y="960">te</PlaceText>
      <PlaceText $size={96} $weight={500} $color="#000" x="1056" y="1250">London</PlaceText>

      <rect x="-30" y="1160" width="110" height="108" rx="20" fill="#c5e8cd" stroke="#4f9a78" strokeWidth="5" />
      <path d="M24,1230 H8 Q-14,1222 -4,1204 Q4,1186 20,1186 Q36,1174 46,1190 Q62,1196 60,1212 Q58,1230 40,1230 H30 V1250 M24,1230 V1250" fill="none" stroke="#4f9a78" strokeWidth="6" />
      <PlaceText $size={57} $color="#5b9d7e" x="107" y="1235">Hyde Park</PlaceText>

      <ellipse cx="2545" cy="716" rx="46" ry="14" fill="#3c5a3c" opacity="0.18" />
      <ellipse cx="2544" cy="716" rx="30" ry="9" fill="#3c5a3c" opacity="0.3" />
      <path d="M2541,722 L2474,634 C2464,620 2460,608 2460,592 A81,81 0 0 1 2622,592 C2622,608 2618,620 2608,634Z" fill="#c84b44" stroke="#93332e" strokeWidth="5" strokeLinejoin="round" />
      <circle cx="2541" cy="594" r="33" fill="#fff" />
    </MapCanvas>
  );
}

export default function App() {
  return (
    <>
      <GlobalStyle />
      <Page>
        <NotesInput aria-label="Description" />
        <Field>
          <FieldLabel htmlFor="address">Location</FieldLabel>
          <FieldHint id="address-hint">
            Type the name of a location, drag the pin to adjust, or click the marker icon to switch to coordinate input mode.
          </FieldHint>
          <MapCard>
            <SearchRow>
              <Icon viewBox="0 0 96 96" aria-hidden="true">
                <circle cx="45" cy="43" r="35" />
                <path d="M70,68 L86,84" />
              </Icon>
              <SearchInput id="address" type="text" placeholder="Search an address..." aria-describedby="address-hint" />
              <Actions>
                <IconButton type="button" aria-label="Use current location">
                  <Icon viewBox="0 0 96 96"><path d="M89,7 L10,43 L43,51 L52,84Z" /></Icon>
                </IconButton>
                <IconButton type="button" aria-label="Satellite view">
                  <Icon viewBox="0 0 96 96">
                    <path d="M38,11 L54,27 L38,44 L22,29Z M72,45 L88,60 L71,77 L55,62Z" />
                    <path d="M51,29 L60,25 L73,38 L70,46 M39,44 L38,53 L49,63 L57,61" />
                    <path d="M69,29 L79,19 M12,61 Q38,62 38,88" />
                  </Icon>
                </IconButton>
                <IconButton type="button" aria-label="More options">
                  <Icon viewBox="0 0 96 96">
                    <g fill="currentColor" stroke="none">
                      <circle cx="20" cy="48" r="8" />
                      <circle cx="48" cy="48" r="8" />
                      <circle cx="76" cy="48" r="8" />
                    </g>
                  </Icon>
                </IconButton>
              </Actions>
            </SearchRow>
            <MapView>
              <LondonMap />
              <Attribution>
                <AttributionLink href="#openstreetmap">OpenStreetMap</AttributionLink>
                <InfoButton type="button" aria-label="Toggle attribution">
                  <svg width="30" height="30" viewBox="0 0 30 30" aria-hidden="true">
                    <circle cx="15" cy="15" r="15" fill="#000" />
                    <circle cx="15" cy="8" r="3" fill="#fff" />
                    <path d="M12,12 H17 V21 H18 V24 H12 V21 H13 V15 H12Z" fill="#fff" />
                  </svg>
                </InfoButton>
              </Attribution>
            </MapView>
          </MapCard>
        </Field>
      </Page>
    </>
  );
}
